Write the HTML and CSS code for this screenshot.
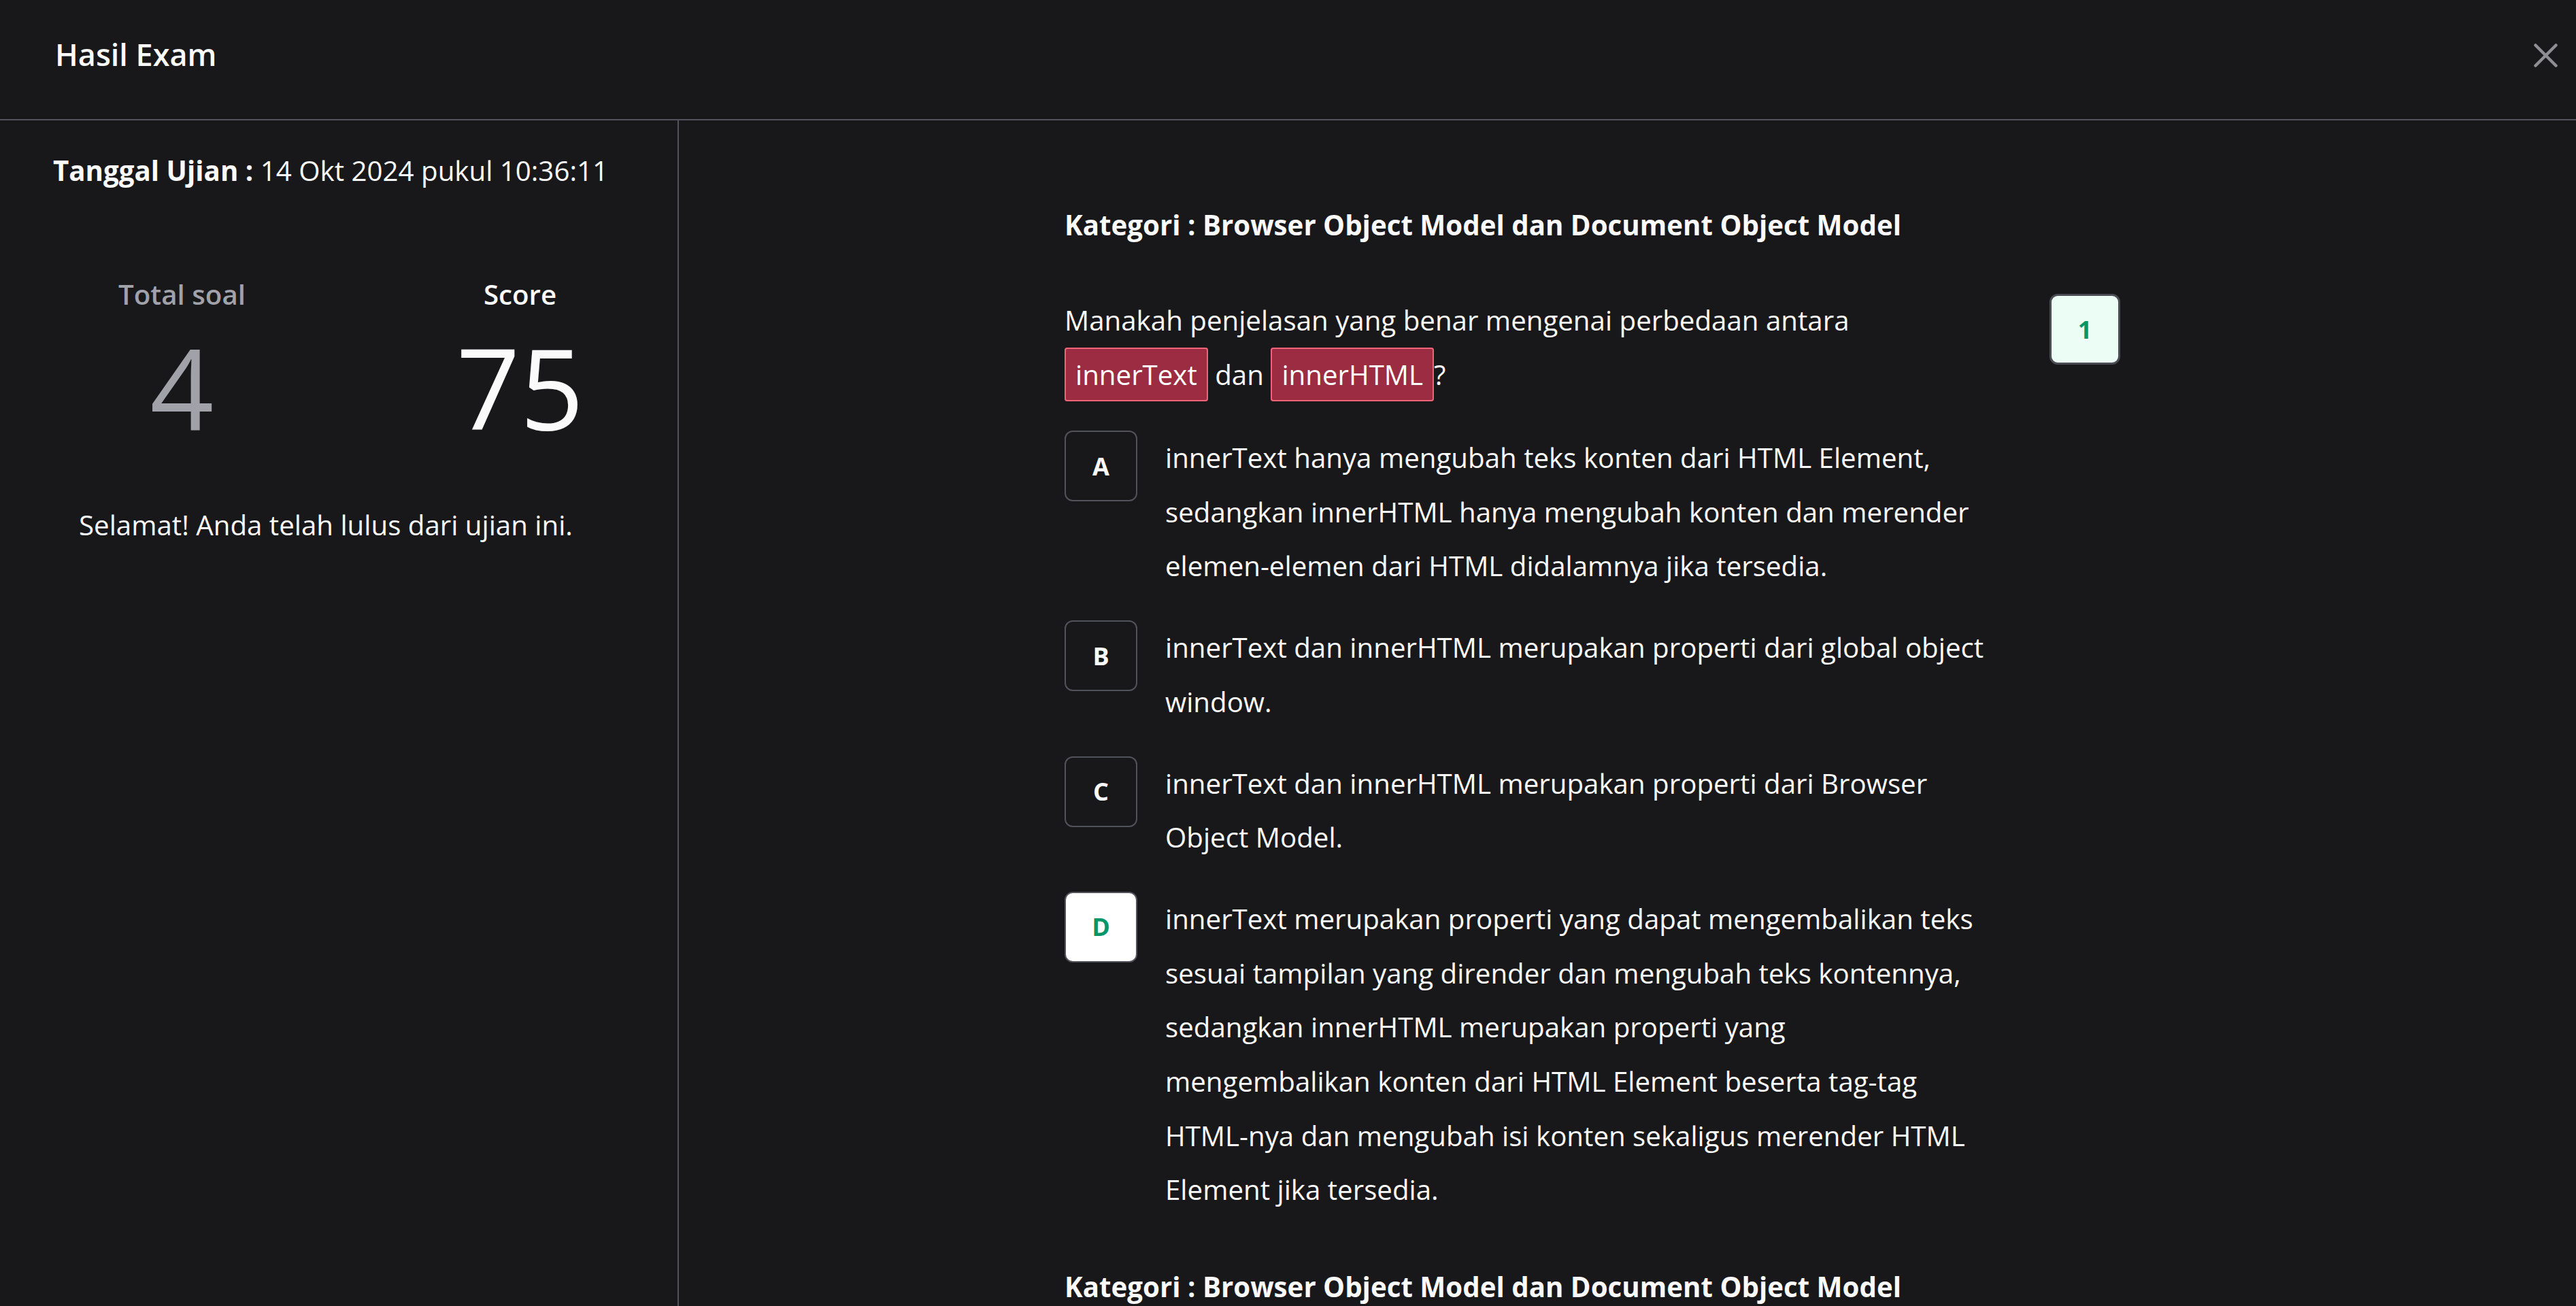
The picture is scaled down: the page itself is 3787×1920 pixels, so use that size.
FILE: index.html
```html
<!DOCTYPE html>
<html lang="id">
<head>
<meta charset="utf-8">
<title>Hasil Exam</title>
<link rel="stylesheet" href="styles.css">
</head>
<body>
<div class="modal">
  <header class="head">
    <h1 class="title">Hasil Exam</h1>
    <button class="close" aria-label="Tutup">
      <svg width="35" height="35" viewBox="0 0 35 35"><path d="M2.5 2.5 L32.5 32.5 M32.5 2.5 L2.5 32.5" stroke="#8e8e93" stroke-width="4.5" stroke-linecap="round" fill="none"/></svg>
    </button>
  </header>
  <div class="content">
    <aside class="side">
      <p class="date"><b>Tanggal Ujian :</b> 14 Okt 2024 pukul 10:36:11</p>
      <div class="stats">
        <div class="stat">
          <div class="stat-label muted">Total soal</div>
          <div class="stat-value muted">4</div>
        </div>
        <div class="stat">
          <div class="stat-label">Score</div>
          <div class="stat-value">75</div>
        </div>
      </div>
      <p class="msg">Selamat! Anda telah lulus dari ujian ini.</p>
    </aside>
    <main class="main">
      <section class="question">
        <h2 class="category">Kategori : Browser Object Model dan Document Object Model</h2>
        <div class="q-row">
          <div class="q-body">
            <p class="q-text">Manakah penjelasan yang benar mengenai perbedaan antara <span class="code">innerText</span> dan <span class="code">innerHTML</span>?</p>
            <div class="options">
              <div class="option">
                <span class="letter">A</span>
                <p class="opt-text">innerText hanya mengubah teks konten dari HTML Element, sedangkan innerHTML hanya mengubah konten dan merender elemen-elemen dari HTML didalamnya jika tersedia.</p>
              </div>
              <div class="option">
                <span class="letter">B</span>
                <p class="opt-text">innerText dan innerHTML merupakan properti dari global object window.</p>
              </div>
              <div class="option">
                <span class="letter">C</span>
                <p class="opt-text">innerText dan innerHTML merupakan properti dari Browser Object Model.</p>
              </div>
              <div class="option">
                <span class="letter correct">D</span>
                <p class="opt-text">innerText merupakan properti yang dapat mengembalikan teks sesuai tampilan yang dirender dan mengubah teks kontennya, sedangkan innerHTML merupakan properti yang mengembalikan konten dari HTML Element beserta tag-tag HTML-nya dan mengubah isi konten sekaligus merender HTML Element jika tersedia.</p>
              </div>
            </div>
          </div>
          <div class="q-num">1</div>
        </div>
      </section>
      <section class="question">
        <h2 class="category">Kategori : Browser Object Model dan Document Object Model</h2>
      </section>
    </main>
  </div>
</div>
</body>
</html>
```
FILE: styles.css
```css
* { box-sizing: border-box; }
html, body {
  margin: 0;
  padding: 0;
  background: #18181b;
}
body {
  width: 3787px;
  height: 1920px;
  overflow: hidden;
  font-family: "Open Sans", "Noto Sans", sans-serif;
  color: #fafafa;
}
.modal {
  display: flex;
  flex-direction: column;
  height: 1920px;
}
.head {
  display: flex;
  justify-content: space-between;
  align-items: flex-start;
  height: 177px;
  padding: 47px 27px 0 81px;
  border-bottom: 2px solid #52525b;
  flex: none;
}
.title {
  margin: 0;
  font-size: 45px;
  line-height: 66px;
  font-weight: 600;
  color: #fafafa;
}
.close {
  margin-top: 17px;
  padding: 0;
  border: 0;
  background: none;
  width: 35px;
  height: 35px;
  display: block;
}
.close svg { display: block; }
.content {
  display: flex;
  flex: 1;
  min-height: 0;
}
.side {
  width: 998px;
  flex: none;
  border-right: 2px solid #52525b;
  padding-top: 44px;
}
.date {
  margin: 0;
  padding-left: 78px;
  font-size: 40.25px;
  line-height: 60px;
}
.date b { font-weight: 700; }
.stats {
  display: grid;
  grid-template-columns: 497px 497px;
  margin-left: 19px;
  margin-top: 124px;
  width: 994px;
}
.stat { text-align: center; }
.stat-label {
  font-size: 40.25px;
  line-height: 56px;
  font-weight: 600;
}
.stat-value {
  margin-top: 26px;
  font-size: 164px;
  line-height: 164px;
  font-weight: 400;
}
.muted { color: #a1a1aa; }
.msg {
  margin: 91px 0 0;
  padding-left: 116px;
  font-size: 40.25px;
  line-height: 60px;
}
.main {
  flex: 1;
  padding: 124px 0 0 567px;
  overflow: hidden;
}
.question + .question { margin-top: 73px; }
.category {
  margin: 0;
  font-size: 40.25px;
  line-height: 60px;
  font-weight: 700;
}
.q-row {
  display: flex;
  align-items: flex-start;
  margin-top: 70px;
}
.q-body {
  width: 1355px;
  flex: none;
}
.q-text {
  margin: 0;
  font-size: 40.25px;
  line-height: 79.5px;
}
.code {
  background: #9b2c42;
  border: 2px solid #ef6479;
  border-radius: 4px;
  padding: 10px 14px;
  color: #fff;
}
.options {
  display: flex;
  flex-direction: column;
  gap: 40px;
  margin-top: 43px;
}
.option {
  display: flex;
  align-items: flex-start;
  gap: 41px;
}
.letter {
  flex: none;
  width: 107px;
  height: 104px;
  border: 2px solid #52525b;
  border-radius: 12px;
  display: flex;
  align-items: center;
  justify-content: center;
  font-size: 36px;
  font-weight: 700;
  color: #fafafa;
}
.letter.correct {
  background: #ffffff;
  color: #059669;
}
.opt-text {
  margin: 0;
  flex: 1;
  font-size: 40.25px;
  line-height: 79.7px;
}
.q-num {
  flex: none;
  margin-left: 93px;
  margin-top: 1px;
  width: 104px;
  height: 104px;
  border: 3px solid #4b4b53;
  border-radius: 12px;
  background: #ecfdf5;
  color: #059669;
  display: flex;
  align-items: center;
  justify-content: center;
  font-size: 36px;
  font-weight: 700;
}
```
